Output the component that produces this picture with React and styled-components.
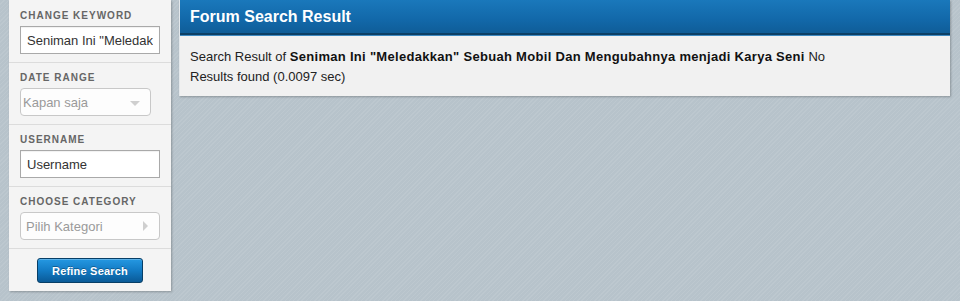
import React from "react";
import styled, { createGlobalStyle } from "styled-components";

const Global = createGlobalStyle`
  html, body { margin: 0; padding: 0; }
  body {
    font-family: "Liberation Sans", Arial, sans-serif;
    background-color: #b7c3cb;
    background-image: repeating-linear-gradient(
      -45deg,
      rgba(255,255,255,0.08) 0px,
      rgba(255,255,255,0.08) 1px,
      rgba(0,0,0,0) 1px,
      rgba(0,0,0,0) 3px
    );
    height: 301px;
    overflow: hidden;
  }
`;

const Page = styled.div`
  display: flex;
  align-items: flex-start;
  gap: 8px;
  padding: 0 10px 0 9px;
`;

const Sidebar = styled.aside`
  width: 162px;
  flex: none;
  background: #f4f4f4;
  box-shadow: 1px 1px 2px rgba(0,0,0,0.25);
  padding-bottom: 8px;
`;

const Section = styled.div`
  padding: ${(p) => (p.$first ? "10px" : "9px")} 11px 8px 11px;
  border-bottom: 1px solid #dcdcdc;
  display: flex;
  flex-direction: column;
  gap: 4px;
`;

const Label = styled.div`
  font-size: 10px;
  font-weight: bold;
  letter-spacing: 1px;
  color: #666;
  line-height: 12px;
  text-transform: uppercase;
`;

const TextInput = styled.input`
  box-sizing: border-box;
  width: 140px;
  height: 28px;
  border: 1px solid #a9a9a9;
  background: #fff;
  padding: 0 6px;
  font-family: "Liberation Sans", Arial, sans-serif;
  font-size: 13px;
  color: #333;
  outline: none;
  box-shadow: inset 0 1px 1px rgba(0,0,0,0.06);
`;

const SelectBox = styled.div`
  box-sizing: border-box;
  width: ${(p) => p.$w}px;
  height: 28px;
  border: 1px solid #c8c8c8;
  border-radius: 4px;
  background: #fdfdfd;
  display: flex;
  align-items: center;
  justify-content: space-between;
  padding: 0 ${(p) => p.$pr}px 0 ${(p) => p.$pl}px;
  font-size: 13px;
  color: #9a9a9a;
`;

const ArrowDown = styled.span`
  width: 0;
  height: 0;
  border-left: 5px solid transparent;
  border-right: 5px solid transparent;
  border-top: 5px solid #cfcfcf;
  margin-top: 2px;
`;

const ArrowRight = styled.span`
  width: 0;
  height: 0;
  border-top: 5px solid transparent;
  border-bottom: 5px solid transparent;
  border-left: 5px solid #cfcfcf;
`;

const ButtonRow = styled.div`
  display: flex;
  justify-content: center;
  padding-top: 9px;
`;

const Button = styled.button`
  width: 106px;
  height: 25px;
  border: 1px solid #073e66;
  border-radius: 3px;
  background: linear-gradient(to bottom, #2598e2 0%, #137bc4 50%, #0a5a97 100%);
  box-shadow: inset 0 1px 0 rgba(255,255,255,0.25);
  color: #fff;
  font-family: "Liberation Sans", Arial, sans-serif;
  font-size: 11px;
  font-weight: bold;
  letter-spacing: 0.2px;
  padding: 0;
  text-shadow: 0 -1px 0 rgba(0,0,0,0.3);
  cursor: pointer;
`;

const Panel = styled.section`
  flex: 1;
  background: #f1f1f1;
  box-shadow: 1px 1px 2px rgba(0,0,0,0.25);
  border-left: 1px solid #e4e8eb;
`;

const PanelHeader = styled.div`
  height: 33px;
  background: linear-gradient(to bottom, #1a78bb 0%, #1268a9 60%, #0f5d98 100%);
  border-bottom: 2px solid #0c3f66;
  box-shadow: 0 1px 0 #3f8ac2;
  display: flex;
  align-items: center;
  padding-left: 10px;
  color: #fff;
  font-size: 16px;
  font-weight: bold;
`;

const PanelBody = styled.div`
  padding: 11px 10px 9px 10px;
  margin-top: 1px;
  font-size: 13px;
  line-height: 20px;
  color: #222;
  max-width: 650px;
`;

const Strong = styled.b`
  color: #111;
  letter-spacing: 0.3px;
`;

export default function App() {
  return (
    <>
      <Global />
      <Page>
        <Sidebar>
          <Section $first>
            <Label>Change Keyword</Label>
            <TextInput
              readOnly
              value={'Seniman Ini "Meledakkan" Sebuah Mobil Dan Mengubahnya menjadi Karya Seni'}
            />
          </Section>
          <Section>
            <Label>Date Range</Label>
            <SelectBox $w={131} $pl={2} $pr={10}>
              <span>Kapan saja</span>
              <ArrowDown />
            </SelectBox>
          </Section>
          <Section>
            <Label>Username</Label>
            <TextInput readOnly value="Username" />
          </Section>
          <Section>
            <Label>Choose Category</Label>
            <SelectBox $w={140} $pl={5} $pr={11}>
              <span>Pilih Kategori</span>
              <ArrowRight />
            </SelectBox>
          </Section>
          <ButtonRow>
            <Button>Refine Search</Button>
          </ButtonRow>
        </Sidebar>
        <Panel>
          <PanelHeader>Forum Search Result</PanelHeader>
          <PanelBody>
            Search Result of{" "}
            <Strong>
              Seniman Ini "Meledakkan" Sebuah Mobil Dan Mengubahnya menjadi Karya Seni
            </Strong>{" "}
            No Results found (0.0097 sec)
          </PanelBody>
        </Panel>
      </Page>
    </>
  );
}
